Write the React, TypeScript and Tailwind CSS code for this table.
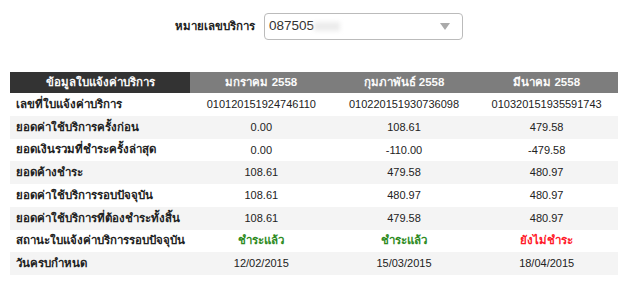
import React from "react";

const months = ["มกราคม 2558", "กุมภาพันธ์ 2558", "มีนาคม 2558"];

type Row = { label: string; values: React.ReactNode[] };

const paid = <span className="font-bold text-[11.5px] text-[#2e8b1e]">ชำระแล้ว</span>;
const unpaid = <span className="font-bold text-[11.5px] text-[#ff1a2a]">ยังไม่ชำระ</span>;

const rows: Row[] = [
  { label: "เลขที่ใบแจ้งค่าบริการ", values: ["010120151924746110", "010220151930736098", "010320151935591743"] },
  { label: "ยอดค่าใช้บริการครั้งก่อน", values: ["0.00", "108.61", "479.58"] },
  { label: "ยอดเงินรวมที่ชำระครั้งล่าสุด", values: ["0.00", "-110.00", "-479.58"] },
  { label: "ยอดค้างชำระ", values: ["108.61", "479.58", "480.97"] },
  { label: "ยอดค่าใช้บริการรอบปัจจุบัน", values: ["108.61", "480.97", "480.97"] },
  { label: "ยอดค่าใช้บริการที่ต้องชำระทั้งสิ้น", values: ["108.61", "479.58", "480.97"] },
  { label: "สถานะใบแจ้งค่าบริการรอบปัจจุบัน", values: [paid, paid, unpaid] },
  { label: "วันครบกำหนด", values: ["12/02/2015", "15/03/2015", "18/04/2015"] },
];

export default function App() {
  return (
    <div className="w-[640px] h-[302px] bg-white text-[#222] font-['Liberation_Sans',sans-serif] text-[11.5px]">
      {/* Service number picker */}
      <div className="flex items-center pt-[13px] pl-[175px] gap-[9px]">
        <span className="font-bold whitespace-nowrap">หมายเลขบริการ</span>
        <div className="w-[199px] h-[27px] border border-[#bbb] rounded-[4px] flex items-center justify-between pl-[4px] pr-[12px]">
          <span className="flex items-center text-[13.5px] text-[#333]">
            087505
            <span className="inline-block w-[26px] h-[9px] bg-[#ececec] blur-[2px]" />
          </span>
          <svg width="10" height="7" viewBox="0 0 10 7">
            <path d="M0 0 H10 L5 7 Z" fill="#aaaaaa" />
          </svg>
        </div>
      </div>

      {/* Bill table */}
      <div className="ml-[10px] mt-[32px] w-[608px]">
        <div className="grid grid-cols-[180px_1fr_1fr_1fr] h-[21px] text-[#fafafa] font-bold">
          <div className="bg-[#333333] flex items-center justify-center">ข้อมูลใบแจ้งค่าบริการ</div>
          {months.map((m) => (
            <div key={m} className="bg-[#7d7d7d] flex items-center justify-center">{m}</div>
          ))}
        </div>
        {rows.map((r, i) => (
          <div
            key={r.label}
            className={`grid grid-cols-[180px_1fr_1fr_1fr] h-[22.75px] ${i % 2 === 1 ? "bg-[#f4f4f4]" : "bg-white"}`}
          >
            <div className="flex items-center pl-[6px] font-bold whitespace-nowrap">{r.label}</div>
            {r.values.map((v, j) => (
              <div key={j} className="flex items-center justify-center text-[11px]">{v}</div>
            ))}
          </div>
        ))}
      </div>
    </div>
  );
}
